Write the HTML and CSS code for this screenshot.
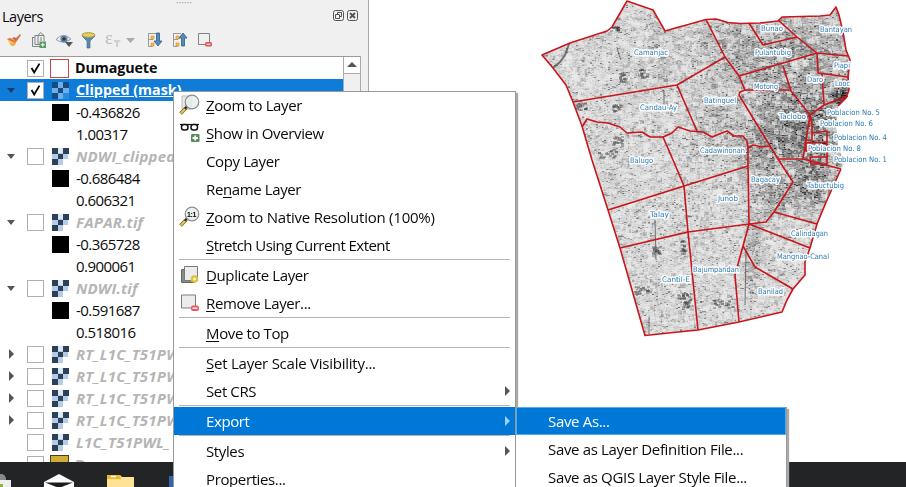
FILE: index.html
```
<!DOCTYPE html>
<html lang="en">
<head>
<meta charset="utf-8">
<title>Layers</title>
<link rel="stylesheet" href="styles.css">
</head>
<body>
<svg class="defs" width="0" height="0" aria-hidden="true">
  <symbol id="raster" viewBox="0 0 17 17">
    <rect width="17" height="17" fill="#f4f8fc"/>
    <path d="M6 0h5v6H6zM0 6h6v5H0zM11 6h5v5h-5zM6 11h5v6H6z" fill="#b4cce8"/>
    <path d="M0 11h6v6H0zM11 0h6v6h-6zM0 0h6v6H0zM6 6h5v5H6z" fill="#2c4057"/>
    <path d="M6 0h5v5H6z" fill="#dbe8f5"/>
    <path d="M11 11h6v6h-6z" fill="#fff"/>
  </symbol>
  <symbol id="raster-sel" viewBox="0 0 17 17">
    <rect width="17" height="17" fill="#277fc8"/>
    <path d="M6 0h5v6H6zM0 6h6v5H0zM11 6h6v5h-6zM6 11h5v6H6z" fill="#70aee5"/>
    <path d="M0 11h6v6H0zM11 0h6v6h-6zM0 0h6v6H0zM6 6h5v5H6z" fill="#164c84"/>
    <path d="M11 11h6v6h-6z" fill="#268be0"/>
  </symbol>
  <symbol id="magnifier" viewBox="0 0 22 22">
    <path d="M7.500 13.500L1.500 19.500" stroke="#7d6527" stroke-width="3.600"/>
    <path d="M7.500 13.500L1.800 19.200" stroke="#e5c75c" stroke-width="2"/>
    <path d="M6 15l2-3" stroke="#222" stroke-width="2"/>
    <circle cx="13" cy="8" r="6.800" fill="#e9ecec" fill-opacity=".85" stroke="#8b8d8d" stroke-width="1.200"/>
  </symbol>
</svg>

<div class="workspace">
  <aside class="panel">
    <div class="grip">······</div>
    <header class="panel-head">
      <h1>Layers</h1>
      <svg class="dock" width="26" height="12" viewBox="0 0 26 12" fill="none" stroke="#555">
        <rect x=".5" y=".5" width="10" height="10" rx="2"/><path d="M4.500 4.500V2.500h4v4h-2M2.500 4.500h4v4h-4z"/>
        <rect x="14.500" y=".5" width="10" height="10" rx="2"/><path d="M17 3l5 5M22 3l-5 5" stroke-width="1.800"/>
      </svg>
    </header>
    <div class="tools">
      <svg width="16" height="16" viewBox="0 0 16 16"><path d="M9 7l5-5 1 1-4 6z" fill="#c77c45"/><path d="M1 7l4-1 6 3-2 4-4 1z" fill="#f0c85a"/><path d="M1 7l3-1 6 4-1 1z" fill="#df6a56"/><path d="M4 11l6 0-2 3-2 0z" fill="#e8b04c"/><path d="M6 6l3-1 2 3-1 2z" fill="#d8644e"/></svg>
      <svg width="16" height="17" viewBox="0 0 16 17" fill="none" stroke="#7b8583"><path d="M1.500 5v9.500H9M1.500 5.500h2M4 3v9.500h6M4 3.500h3M7 12V3.500l2.500-3 3.500 3V9M7 3.500h6M10 5v4"/><rect x="8.500" y="9.500" width="6.500" height="6.500" fill="#5a9a60" stroke="none"/><path d="M9.800 12.800h4M11.800 10.800v4" stroke="#fff"/></svg>
      <svg width="20" height="17" viewBox="0 0 20 17"><path d="M1 7.500Q8 -.5 16 7Q8 13 1 7.500z" fill="#e9eff4" stroke="#929ba2"/><circle cx="9" cy="7" r="3.600" fill="#6286a6"/><circle cx="9" cy="7" r="1.700" fill="#334"/><path d="M10 10h8l-4 5z" fill="#555"/></svg>
      <svg width="15" height="17" viewBox="0 0 15 17"><path d="M1 4l5 5v7h3V9l5-5z" fill="#5c87b2" stroke="#456b93" stroke-width=".7"/><ellipse cx="7.500" cy="3" rx="6.500" ry="2.300" fill="#e7cf55" stroke="#a69a51"/></svg>
      <svg width="31" height="17" viewBox="0 0 31 17"><text x="0" y="12" class="eps">ε</text><path d="M8 8h8l-3 3v4h-2v-4z" fill="#d0d0d0"/><path d="M21 6h9l-4.500 5z" fill="#aaa"/></svg>
      <svg width="16" height="16" viewBox="0 0 16 16"><path d="M1 1.500h8M1.500 1v13.500h4M2 7.500h4" fill="none" stroke="#999"/><path d="M4 4h3v3H4zM4 11h3v3H4z" fill="#f3bf4e" stroke="#d68e28" stroke-width=".6"/><path d="M9.500 1h3v8h2.500l-4 5-4-5h2.500z" fill="#568abb" stroke="#2d5e8c" stroke-width=".8"/></svg>
      <svg width="16" height="16" viewBox="0 0 16 16"><path d="M1 1.500h8M1.500 1v13.500h4M2 7.500h4" fill="none" stroke="#999"/><path d="M4 4h3v3H4zM4 11h3v3H4z" fill="#f3bf4e" stroke="#d68e28" stroke-width=".6"/><path d="M9.500 14h3V6H15l-4-5-4 5h2.500z" fill="#568abb" stroke="#2d5e8c" stroke-width=".8"/></svg>
      <svg width="16" height="16" viewBox="0 0 16 16"><path d="M1.500 1.500h11v11h-11z" fill="#f1f1f1" stroke="#7d8280"/><rect x="8" y="10" width="7" height="4.500" rx="1.500" fill="#df5560"/><path d="M9.500 12.200h4" stroke="#fff"/></svg>
    </div>
    <div class="treebox">
      <ul class="tree">
        <li class="row"><i class="arrow"></i><svg class="box" viewBox="0 0 17 17"><path d="M4 8l3 5 6-10"/></svg><i class="poly"></i><b>Dumaguete</b></li>
        <li class="row selected"><i class="arrow open"></i><svg class="box" viewBox="0 0 17 17"><path d="M4 8l3 5 6-10"/></svg><svg class="ras"><use href="#raster-sel"/></svg><b class="clip">Clipped (mask)</b></li>
        <li class="row value"><i class="black"></i><span>-0.436826</span></li>
        <li class="row value"><i></i><span>1.00317</span></li>
        <li class="row off"><i class="arrow open"></i><svg class="box"></svg><svg class="ras"><use href="#raster"/></svg><b>NDWI_clipped</b></li>
        <li class="row value"><i class="black"></i><span>-0.686484</span></li>
        <li class="row value"><i></i><span>0.606321</span></li>
        <li class="row off"><i class="arrow open"></i><svg class="box"></svg><svg class="ras"><use href="#raster"/></svg><b>FAPAR.tif</b></li>
        <li class="row value"><i class="black"></i><span>-0.365728</span></li>
        <li class="row value"><i></i><span>0.900061</span></li>
        <li class="row off"><i class="arrow open"></i><svg class="box"></svg><svg class="ras"><use href="#raster"/></svg><b>NDWI.tif</b></li>
        <li class="row value"><i class="black"></i><span>-0.591687</span></li>
        <li class="row value"><i></i><span>0.518016</span></li>
        <li class="row off"><i class="arrow closed"></i><svg class="box"></svg><svg class="ras"><use href="#raster"/></svg><b>RT_L1C_T51PWL</b></li>
        <li class="row off"><i class="arrow closed"></i><svg class="box"></svg><svg class="ras"><use href="#raster"/></svg><b>RT_L1C_T51PWL</b></li>
        <li class="row off"><i class="arrow closed"></i><svg class="box"></svg><svg class="ras"><use href="#raster"/></svg><b>RT_L1C_T51PWL</b></li>
        <li class="row off"><i class="arrow closed"></i><svg class="box"></svg><svg class="ras"><use href="#raster"/></svg><b>RT_L1C_T51PWL</b></li>
        <li class="row off"><i class="arrow"></i><svg class="box"></svg><svg class="ras"><use href="#raster"/></svg><b>L1C_T51PWL_</b></li>
        <li class="row off"><i class="arrow"></i><svg class="box"></svg><i class="poly gold"></i><b class="upright">D</b></li>
      </ul>
      <div class="scroll"><i></i></div>
    </div>
  </aside>
  <main class="map">
    <canvas id="pixels" width="537" height="462"></canvas>
    <svg class="bounds" viewBox="369 0 537 462" width="537" height="462">
      <g fill="none" stroke="#c9161c" stroke-width="1.600" stroke-linejoin="round">
        <path id="outline" d="M627 1L653 10L665 31L706 19.500L716 19L728 22.500L740 23.500L760 23L778 21L782 17L800 16.500L820 16L830 15L836 7L839 15L843 32L846 50L850 60L849 78L849 90L846 98L838 106L836 125L838 145L844 162L841 169L827 200L817 224L810 248L805 262L805 275L793 289L787 300L782 312L739 322L698 330L645 335.500L620 248L608 210L592 160L582 126L573 102L566 85L553 68L542 55L570 43L607 31L612 27Z" stroke="none"/>
        <path d="M838 106L846 98L849 90L848 77L850 60L846 50L843 32L839 15L836 7L830 15L820 16L782 17L778 21L760 23L740 23.500L728 22.500L716 19L706 19.500L665 31L653 10L627 1L612 27L607 31L570 43L542 55L553 68L566 85L573 102L582 126L592 160L608 210L620 248L645 335.500L698 330L739 322L782 312L787 300L793 289L805 275L805 262L810 248L817 224L827 200L841 169"/>
        <path d="M573 102L677 85L725 57M677 85L697 131M706 19.500L725 57L739 76L745 90L740 92L739 95L778 159L793 182L774 212L766 222L749 224L688 232L620 248"/>
        <path d="M582 127L587 119L597 122L608 123L620 127L627 133L642 132L650 137L663 137L672 133L678 127L690 131L703 132L712 137L722 133L727 131L734 136L743 136L747 141L748 148L753 145L762 147L770 146"/>
        <path d="M663 137L673 160L684 186L688 232L698 330M608 210L684 186L748 166M748 148V166L749 224L743 246L735 275L739 322M774 212L817 224M749 224L810 248M743 246L755 267L793 289"/>
        <path d="M749 23L763 45L797 37M778 20L797 37L817 53L848 56M817 53L739 76M817 53L818 73L848 77M783 66L791 91L810 115L824 105L848 96M745 90H791M822 74L824 105M778 159L803 159L841 169M810 115L812 123L812 140H805M810 116L806 140L803 159M812 133L827 131V142L805 143M827 131V164L811 164L810 157H827M806 143V151H827"/>
      </g>
      <g class="labels">
        <text x="634" y="54.500" textLength="34" lengthAdjust="spacingAndGlyphs">Camanjac</text>
        <text x="640" y="110" textLength="37" lengthAdjust="spacingAndGlyphs">Candau-Ay</text>
        <text x="630" y="162.500" textLength="23" lengthAdjust="spacingAndGlyphs">Balugo</text>
        <text x="704" y="102.500" textLength="32" lengthAdjust="spacingAndGlyphs">Batinguel</text>
        <text x="700" y="153" textLength="45" lengthAdjust="spacingAndGlyphs">Cadawinonan</text>
        <text x="761" y="30.500" textLength="22" lengthAdjust="spacingAndGlyphs">Bunao</text>
        <text x="820" y="31.500" textLength="32" lengthAdjust="spacingAndGlyphs">Bantayan</text>
        <text x="755" y="55" textLength="36" lengthAdjust="spacingAndGlyphs">Pulantubig</text>
        <text x="834" y="68" textLength="16" lengthAdjust="spacingAndGlyphs">Piapi</text>
        <text x="754" y="88.500" textLength="24" lengthAdjust="spacingAndGlyphs">Motong</text>
        <text x="807" y="82" textLength="16" lengthAdjust="spacingAndGlyphs">Daro</text>
        <text x="835" y="85.500" textLength="15" lengthAdjust="spacingAndGlyphs">Looc</text>
        <text x="779" y="119" textLength="27" lengthAdjust="spacingAndGlyphs">Taclobo</text>
        <text x="827" y="115" textLength="53" lengthAdjust="spacingAndGlyphs">Poblacion No. 5</text>
        <text x="820" y="126" textLength="53" lengthAdjust="spacingAndGlyphs">Poblacion No. 6</text>
        <text x="834" y="139.500" textLength="53" lengthAdjust="spacingAndGlyphs">Poblacion No. 4</text>
        <text x="808" y="151" textLength="53" lengthAdjust="spacingAndGlyphs">Poblacion No. 8</text>
        <text x="834" y="162" textLength="53" lengthAdjust="spacingAndGlyphs">Poblacion No. 1</text>
        <text x="751" y="181.500" textLength="29" lengthAdjust="spacingAndGlyphs">Bagacay</text>
        <text x="807" y="187.500" textLength="37" lengthAdjust="spacingAndGlyphs">Tabuctubig</text>
        <text x="718" y="200.500" textLength="20" lengthAdjust="spacingAndGlyphs">Junob</text>
        <text x="650" y="217" textLength="19" lengthAdjust="spacingAndGlyphs">Talay</text>
        <text x="791" y="235.500" textLength="37" lengthAdjust="spacingAndGlyphs">Calindagan</text>
        <text x="777" y="259" textLength="52" lengthAdjust="spacingAndGlyphs">Mangnao-Canal</text>
        <text x="693" y="272" textLength="46" lengthAdjust="spacingAndGlyphs">Bajumpandan</text>
        <text x="662" y="282" textLength="28" lengthAdjust="spacingAndGlyphs">Cantil-E</text>
        <text x="758" y="293.500" textLength="25" lengthAdjust="spacingAndGlyphs">Banilad</text>
      </g>
    </svg>
  </main>
</div>

<footer class="taskbar">
  <svg width="180" height="25" viewBox="0 462 180 25">
    <circle cx="1" cy="479" r="5" fill="#888"/><path d="M0 480h11v7H0z" fill="#eee"/><path d="M0 484h3v3H0z" fill="#8abc28"/>
    <path d="M44 482l15-8 15 8v5H44z" fill="#fff"/><path d="M45 482.500h28L59 488z" fill="#1b1c1e"/>
    <path d="M107 475h13l2 2h12v10h-27z" fill="#ffe296"/><path d="M107 475h13l1 4h-14z" fill="#efb72a"/><path d="M111 476.500h5" stroke="#fff" stroke-width="1.500"/>
    <path d="M169 476h8v11h-8z" fill="#3563ad"/>
  </svg>
</footer>

<nav class="menu">
  <div class="item first"><svg class="ico" viewBox="0 0 22 22"><path d="M3 2h9v13H3z" fill="#e8e8e8" stroke="#bbb"/><use href="#magnifier"/></svg><span><u>Z</u>oom to Layer</span></div>
  <div class="item"><svg class="ico" viewBox="0 0 22 22"><path d="M1 2.500h19" stroke="#111" stroke-width="1.200"/><rect x="2.500" y="2.500" width="6.500" height="5.500" rx="2.500" fill="#fff" stroke="#111" stroke-width="1.500"/><rect x="12" y="2.500" width="6.500" height="5.500" rx="2.500" fill="#fff" stroke="#111" stroke-width="1.500"/><rect x="12" y="12" width="8.500" height="8" rx="1" fill="#528c5b"/><path d="M13.500 16h5.500M16.300 13.500v5" stroke="#fff" stroke-width="2"/></svg><span><u>S</u>how in Overview</span></div>
  <div class="item"><i class="ico"></i><span>Copy Layer</span></div>
  <div class="item"><i class="ico"></i><span>Re<u>n</u>ame Layer</span></div>
  <div class="item loose"><svg class="ico" viewBox="0 0 22 22"><use href="#magnifier"/><text x="8" y="11" class="ratio">1:1</text></svg><span><u>Z</u>oom to Native Resolution (100%)</span></div>
  <div class="item tight"><i class="ico"></i><span><u>S</u>tretch Using Current Extent</span></div>
  <hr>
  <div class="item"><svg class="ico" viewBox="0 0 22 22"><path d="M2.500 5.500h13v13h-13z" fill="#888b88" stroke="#656865"/><path d="M5.500 2.500h13v14h-13z" fill="#ececec" stroke="#777a77"/><circle cx="15.500" cy="15" r="3.800" fill="#ddc13c"/><circle cx="15.500" cy="15" r="1.500" fill="#fff4b0"/></svg><span><u>D</u>uplicate Layer</span></div>
  <div class="item"><svg class="ico" viewBox="0 0 22 22"><path d="M2.500 3h14v13h-14z" fill="#ececec" stroke="#7a7d7a"/><rect x="12" y="13.500" width="8" height="5.500" rx="2" fill="#e45b64"/><path d="M13.500 16.200h5" stroke="#fff" stroke-width="1.300"/></svg><span><u>R</u>emove Layer...</span></div>
  <hr>
  <div class="item"><i class="ico"></i><span><u>M</u>ove to Top</span></div>
  <hr>
  <div class="item loose"><i class="ico"></i><span><u>S</u>et Layer Scale Visibility...</span></div>
  <div class="item more"><i class="ico"></i><span>Set CRS</span></div>
  <hr>
  <div class="item more hot"><i class="ico"></i><span>Export</span></div>
  <hr>
  <div class="item more"><i class="ico"></i><span>Styles</span></div>
  <div class="item"><i class="ico"></i><span><u>P</u>roperties...</span></div>
</nav>
<nav class="menu submenu">
  <div class="item hot"><i class="ico"></i><span>Save As...</span></div>
  <div class="item"><i class="ico"></i><span>Save as Layer Definition File...</span></div>
  <div class="item"><i class="ico"></i><span>Save as QGIS Layer Style File...</span></div>
</nav>
<script src="map.js"></script>
</body>
</html>
```
FILE: styles.css
```
* { box-sizing: border-box; }
body { margin: 0; width: 906px; height: 487px; overflow: hidden; position: relative; display: flex; flex-direction: column; background: #fff; color: #0b0b0b; font-family: "Open Sans", "Noto Sans", sans-serif; font-size: 15px; }
.defs { position: absolute; }
.workspace { display: flex; height: 462px; overflow: hidden; }
.panel { width: 369px; background: #f0f0f0; border-right: 1px solid #a8a8a8; display: flex; flex-direction: column; flex: none; }
.grip { height: 8px; line-height: 5px; font-size: 10px; color: #999; text-align: center; }
.panel-head { height: 18px; display: flex; justify-content: space-between; padding: 0 9px 0 2px; }
.panel-head h1 { margin: 0; font-size: 14.5px; line-height: 18px; font-weight: 400; letter-spacing: -.5px; }
.dock { margin-top: 2px; }
.tools { height: 30px; display: flex; padding: 6px 0 0 6px; }
.tools svg { margin-right: 9px; }
.tools svg:nth-child(3) { margin: 0 6px 0 -1px; }
.tools svg:nth-child(5) { margin-right: 11px; }
.eps { font: 18px "Liberation Serif", serif; fill: #bdbdbd; }
.treebox { flex: 1; min-height: 0; margin-right: 7px; border-top: 1px solid #999; border-right: 1px solid #aaa; background: #fff; display: flex; }
.tree { list-style: none; margin: 0; padding: 0; width: 343px; overflow: hidden; flex: none; }
.scroll { flex: 1; border-left: 1px solid #aaa; background: #f0f0f0; }
.scroll i { display: block; height: 17px; border-bottom: 1px solid #aaa; background: #fff; }
.scroll i::before { content: ""; display: block; border: 5px solid transparent; border-bottom-color: #555; border-top: 0; width: 0; margin: auto; position: relative; top: 5px; }
.row { height: 22px; display: flex; align-items: center; white-space: nowrap; line-height: 22px; }
.row b { font-size: 14.300px; letter-spacing: -.1px; }
.row .clip { letter-spacing: 0; }
.row i { flex: none; }
.arrow { width: 27px; height: 10px; display: flex; align-items: center; padding-left: 7px; }
.open::before { content: ""; border: 4.500px solid transparent; border-top: 5px solid #555; border-bottom: 0; }
.closed::before { content: ""; margin-left: 2px; border: 5px solid transparent; border-left-color: #555; border-right: 0; }
.box { width: 17px; height: 17px; border: 1px solid #b0b0b0; background: #fff; flex: none; margin-right: 8px; }
.box path { fill: none; stroke: #000; stroke-width: 2; }
.ras { width: 17px; height: 17px; margin-right: 7px; flex: none; }
.poly { width: 19px; height: 19px; border: 1px solid #c44; background: #fff; margin: 0 6px 0 -2px; }
.gold { background: #d0ae35; border-color: #443d20; }
.selected { background: #0f7cd9; color: #fff; }
.selected .open::before { border-top-color: #113c67; }
.selected b { text-decoration: underline; }
.value { padding-left: 52px; font-size: 15px; }
.value span { letter-spacing: -.55px; }
.value i { width: 17px; height: 17px; margin-right: 7px; }
.black { background: #000; }
.row.off b { color: #b5b5b5; font-style: italic; font-size: 15px; letter-spacing: .2px; }
.row.off .upright { font-style: normal; }
.map { width: 537px; display: grid; background: #fff; }
.map > * { grid-area: 1 / 1; display: block; }
.labels { font: 7.600px "DejaVu Sans", sans-serif; fill: #2c7bb3; stroke: #fff; stroke-width: 3px; stroke-linejoin: round; paint-order: stroke; }
.taskbar { height: 25px; background: #232426; flex: none; }
.taskbar svg { display: block; }
.menu { position: absolute; left: 173px; top: 91px; width: 343px; height: 410px; background: #fff; border: 1px solid #999; box-shadow: 2px 2px 1px #aaa; }
.item { height: 28px; display: flex; align-items: center; white-space: nowrap; padding-left: 5px; line-height: 28px; letter-spacing: -.38px; }
.item.first { height: 27px; padding-bottom: 2px; }
.item.loose { letter-spacing: -.24px; }
.item.tight { letter-spacing: -.55px; }
.ico { width: 22px; height: 22px; margin-right: 5px; flex: none; }
.item u { text-underline-offset: 2px; }
.ratio { font: bold 7px "Liberation Sans", sans-serif; letter-spacing: -.3px; }
.menu hr { height: 2px; border: 0; border-top: 1px solid #b5b5b5; margin: 0 5px; }
.hot { background: #0078d7; color: #fff; }
.more::after { content: ""; margin: 0 5px 0 auto; border: 5px solid transparent; border-left-color: #555; border-right: 0; }
.more.hot::after { border-left-color: #99d1ff; }
.submenu { left: 515px; top: 407px; width: 272px; height: 90px; border-top: 0; }
.submenu .item { letter-spacing: -.33px; }
.submenu .hot { box-shadow: inset 0 0 0 1px #56a9ea; }
```
FILE: map.js
```
// Grey raster cells drawn inside the district outline.
var canvas = document.getElementById('pixels');
var ctx = canvas.getContext('2d');
var seed = 7;
function rnd() { seed = (seed * 1664525 + 1013904223) % 4294967296; return seed / 4294967296; }
ctx.translate(-369, 0);
ctx.clip(new Path2D(document.getElementById('outline').getAttribute('d')));
// Built-up areas: centre x, centre y, radius x, radius y, darkness
var urban = [[800, 125, 50, 60, .6], [765, 145, 30, 45, .45], [815, 185, 28, 24, .55], [790, 60, 70, 45, .42],
  [775, 190, 25, 28, .4], [752, 245, 10, 45, .3], [845, 98, 16, 14, 1], [720, 120, 40, 35, .28], [745, 40, 50, 35, .3], [680, 50, 70, 50, .16]];
function dens(x, y) {
  var d = 0.08;
  urban.forEach(function (u) {
    var q = Math.pow((x - u[0]) / u[2], 2) + Math.pow((y - u[1]) / u[3], 2);
    d = Math.max(d, u[4] * Math.exp(-q * .7));
  });
  return d;
}
function grey(v, a) { ctx.fillStyle = 'rgba(' + v + ',' + v + ',' + v + ',' + a + ')'; }
for (var y = 0; y < 340; y += 1) {
  for (var x = 540; x < 854; x += 2) {
    var d = dens(x, y), v = 236 - d * 110 - rnd() * (24 + d * 90);
    if (rnd() < .08 + d * .25) v -= rnd() * 90;
    grey(Math.max(25, Math.round(v)), 1);
    ctx.fillRect(x, y, 2, 1);
  }
}
for (var i = 0; i < 7500; i++) {
  var px = 540 + rnd() * 312, py = rnd() * 338, k = dens(px, py), light = rnd() < .62 - k * .35;
  grey(light ? 236 : Math.round(70 + rnd() * 110), light ? .5 : .2 + k * .45);
  var s = light ? 6 : 4;
  ctx.fillRect(Math.round(px), Math.round(py), 1 + Math.round(rnd() * s), 1 + Math.round(rnd() * s * .8));
}
// Darker parcels and water courses
[[610, 25, 10, 6], [638, 69, 8, 9], [612, 104, 8, 8], [612, 135, 10, 12], [597, 149, 18, 8], [634, 285, 15, 9],
 [676, 293, 14, 5], [681, 299, 8, 9], [712, 300, 20, 7], [651, 246, 8, 8], [618, 72, 6, 10], [680, 239, 4, 14], [801, 165, 18, 13], [575, 102, 10, 7]].forEach(function (r) {
  for (var n = 0; n < 20; n++) {
    grey(60, .35);
    ctx.fillRect(Math.round(r[0] + rnd() * r[2]), Math.round(r[1] + rnd() * r[3]), 3, 2);
  }
});
ctx.strokeStyle = 'rgba(70,70,70,.7)';
ctx.lineWidth = 2;
ctx.stroke(new Path2D('M569 44L565 55L560 62L553 68'));
ctx.lineWidth = 1;
ctx.stroke(new Path2D('M617 47L619 55L621 60M655 220L656 260M649 317V334M746 250L745 305M664 90V106'));
```
